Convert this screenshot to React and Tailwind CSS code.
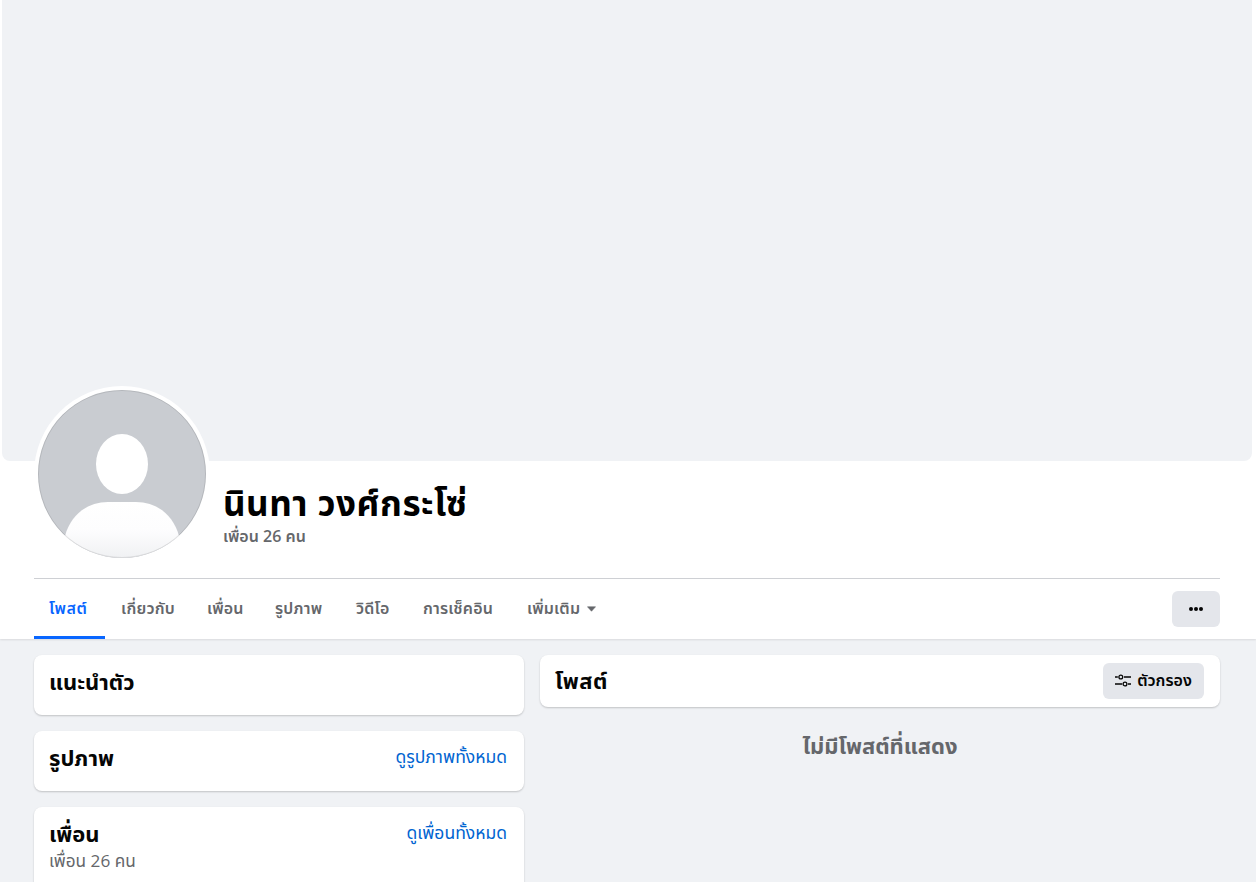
import React from 'react'

const font = { fontFamily: '"Open Sans", "Noto Sans", "Noto Sans Thai", "Liberation Sans", sans-serif' }

const tabs = [
  { label: 'เกี่ยวกับ', width: 'w-[86px]' },
  { label: 'เพื่อน', width: 'w-[68px]' },
  { label: 'รูปภาพ', width: 'w-[81px]' },
  { label: 'วิดีโอ', width: 'w-[67px]' },
  { label: 'การเช็คอิน', width: 'w-[104px]' },
]

function Avatar() {
  return (
    <div className="w-[176px] h-[176px] rounded-full bg-white p-1 shrink-0">
      <svg viewBox="0 0 168 168" className="w-[168px] h-[168px] block">
        <defs>
          <linearGradient id="body" x1="0" y1="0" x2="0" y2="1">
            <stop offset="0" stopColor="#ffffff" />
            <stop offset="0.5" stopColor="#fdfdfe" />
            <stop offset="1" stopColor="#f0f1f3" />
          </linearGradient>
          <clipPath id="round">
            <circle cx="84" cy="84" r="84" />
          </clipPath>
        </defs>
        <circle cx="84" cy="84" r="84" fill="#c9ccd1" />
        <g clipPath="url(#round)">
          <ellipse cx="84" cy="74" rx="26" ry="30" fill="#ffffff" />
          <path d="M27 146 C33 124 50 112 70 112 L98 112 C118 112 135 124 141 146 C128 160 106 168 84 168 C62 168 40 160 27 146 Z" fill="url(#body)" />
        </g>
        <circle cx="84" cy="84" r="83.5" fill="none" stroke="#000000" strokeOpacity="0.1" />
      </svg>
    </div>
  )
}

function Card({ title, link }) {
  return (
    <div className="bg-white rounded-lg shadow-[0_1px_2px_rgba(0,0,0,0.2)] pl-[15px] pr-[17px] pt-[11px] h-[60px] flex justify-between items-start">
      <div className="text-[22px] leading-[30px] font-bold text-[#050505]">{title}</div>
      {link && <a className="text-[17.5px] leading-[28px] text-[#0064d1]">{link}</a>}
    </div>
  )
}

export default function App() {
  return (
    <div className="h-screen overflow-hidden bg-[#f0f2f5]" style={font}>
      <div className="bg-white shadow-[0_1px_2px_rgba(0,0,0,0.1)] relative">
        <div className="pl-[2px] pr-[4px]">
          <div className="h-[461px] bg-[#f0f2f5] rounded-b-lg"></div>
        </div>
        <div className="pl-[34px] pr-[36px]">
          <div className="flex items-start h-[118px] border-b border-[#ced0d4]">
            <div className="-mt-[75px]">
              <Avatar />
            </div>
            <div className="ml-[13px] pt-[22px]">
              <h1 className="text-[35px] leading-[40px] font-bold text-black tracking-[0.5px]">นินทา วงศ์กระโซ่</h1>
              <div className="text-[16px] leading-[20px] font-semibold text-[#65676b] mt-[3px]">เพื่อน 26 คน</div>
            </div>
          </div>
          <div className="h-[60px] flex items-stretch justify-between">
            <div className="flex">
              <div className="w-[71px] pl-[15px] flex items-center text-[16px] font-semibold text-[#0866ff] border-b-[3px] border-[#0866ff] pt-px tracking-[0.5px]">โพสต์</div>
              {tabs.map((t) => (
                <div key={t.label} className={`${t.width} pl-4 pb-[2px] flex items-center text-[16px] font-semibold text-[#65676b] tracking-[0.2px]`}>{t.label}</div>
              ))}
              <div className="pl-4 pb-[2px] flex items-center text-[16px] font-semibold text-[#65676b] tracking-[0.2px]">
                เพิ่มเติม
                <svg viewBox="0 0 10 6" className="w-[9px] h-[6px] ml-[7px] mt-[1px]">
                  <path d="M0.5 0.5 H9.5 L5 5.5 Z" fill="#65676b" stroke="#65676b" strokeLinejoin="round" strokeWidth="0.6" />
                </svg>
              </div>
            </div>
            <div className="flex items-center">
              <button className="w-12 h-9 rounded-md bg-[#e4e6eb] flex items-center justify-center gap-px">
                <span className="w-1 h-1 rounded-full bg-[#050505]"></span>
                <span className="w-1 h-1 rounded-full bg-[#050505]"></span>
                <span className="w-1 h-1 rounded-full bg-[#050505]"></span>
              </button>
            </div>
          </div>
        </div>
      </div>
      <div className="pl-[34px] pr-[36px] pt-4 flex gap-4 items-start">
        <div className="w-[490px] flex flex-col gap-4 shrink-0">
          <Card title="แนะนำตัว" />
          <Card title="รูปภาพ" link="ดูรูปภาพทั้งหมด" />
          <div className="bg-white rounded-lg shadow-[0_1px_2px_rgba(0,0,0,0.2)] pl-[15px] pr-[17px] pt-[11px] h-[120px] flex justify-between items-start">
            <div>
              <div className="text-[22px] leading-[30px] font-bold text-[#050505]">เพื่อน</div>
              <div className="text-[17.2px] leading-[26px] text-[#65676b]">เพื่อน 26 คน</div>
            </div>
            <a className="text-[17.5px] leading-[28px] text-[#0064d1]">ดูเพื่อนทั้งหมด</a>
          </div>
        </div>
        <div className="flex-1 min-w-0">
          <div className="bg-white rounded-lg shadow-[0_1px_2px_rgba(0,0,0,0.2)] h-[52px] pl-[15px] pr-4 flex items-center justify-between">
            <div className="text-[22px] font-bold text-[#050505] tracking-[0.5px] pb-[2px]">โพสต์</div>
            <button className="h-9 w-[101px] rounded-md bg-[#e4e6eb] flex items-center justify-center gap-[6px] text-[16px] font-semibold text-[#050505]">
              <svg viewBox="0 0 16 16" className="w-4 h-4" fill="none" stroke="#050505" strokeWidth="1.3">
                <path d="M0 4 H2.8 M9 4 H16 M0 11 H7 M13 11 H16" />
                <circle cx="5.8" cy="4" r="1.9" />
                <circle cx="10" cy="11" r="1.9" />
              </svg>
              <span className="pb-[2px]">ตัวกรอง</span>
            </button>
          </div>
          <div className="mt-[23px] text-center text-[22px] leading-[30px] font-bold text-[#65676b]">ไม่มีโพสต์ที่แสดง</div>
        </div>
      </div>
    </div>
  )
}
